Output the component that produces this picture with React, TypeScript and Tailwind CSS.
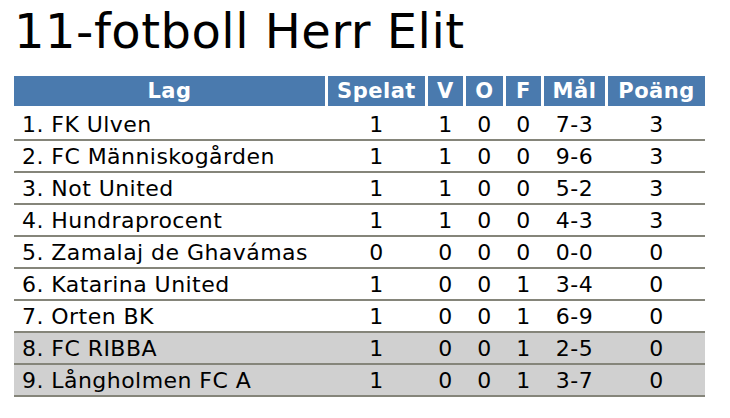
import React from "react";

const rows: [string, string, string, string, string, string, string, boolean][] = [
  ["1. FK Ulven", "1", "1", "0", "0", "7-3", "3", false],
  ["2. FC Människogården", "1", "1", "0", "0", "9-6", "3", false],
  ["3. Not United", "1", "1", "0", "0", "5-2", "3", false],
  ["4. Hundraprocent", "1", "1", "0", "0", "4-3", "3", false],
  ["5. Zamalaj de Ghavámas", "0", "0", "0", "0", "0-0", "0", false],
  ["6. Katarina United", "1", "0", "0", "1", "3-4", "0", false],
  ["7. Orten BK", "1", "0", "0", "1", "6-9", "0", false],
  ["8. FC RIBBA", "1", "0", "0", "1", "2-5", "0", true],
  ["9. Långholmen FC A", "1", "0", "0", "1", "3-7", "0", true],
];

const cols = "grid grid-cols-[311px_97px_35px_37px_35px_61px_97px] gap-x-[3px]";

export default function App() {
  return (
    <div className="w-[730px] h-[418px] bg-white pl-[14px] font-['DejaVu_Sans',sans-serif] text-black overflow-hidden">
      <h1 className="mt-[7px] text-[48px] leading-[48px] font-normal tracking-[0.5px]">11-fotboll Herr Elit</h1>
      <div className="mt-[21px] w-[691px]">
        <div className={`${cols} h-[30px] text-[21px] leading-[30px] font-bold text-white tracking-[0.5px]`}>
          {["Lag", "Spelat", "V", "O", "F", "Mål", "Poäng"].map((h) => (
            <div key={h} className="bg-[#4a7aae] text-center">
              {h}
            </div>
          ))}
        </div>
        <div className="mt-[3px]">
          {rows.map((r) => (
            <div
              key={r[0]}
              className={`${cols} h-[32px] border-b-2 border-[#85857a] text-[22px] leading-[30px] tracking-[0.45px] ${r[7] ? "bg-[#d0d0d0]" : "bg-white"}`}
            >
              <div className="pl-2 pt-[1px] whitespace-nowrap">{r[0]}</div>
              {r.slice(1, 7).map((c, i) => (
                <div key={i} className="text-center pt-[1px]">
                  {c as string}
                </div>
              ))}
            </div>
          ))}
        </div>
      </div>
    </div>
  );
}
